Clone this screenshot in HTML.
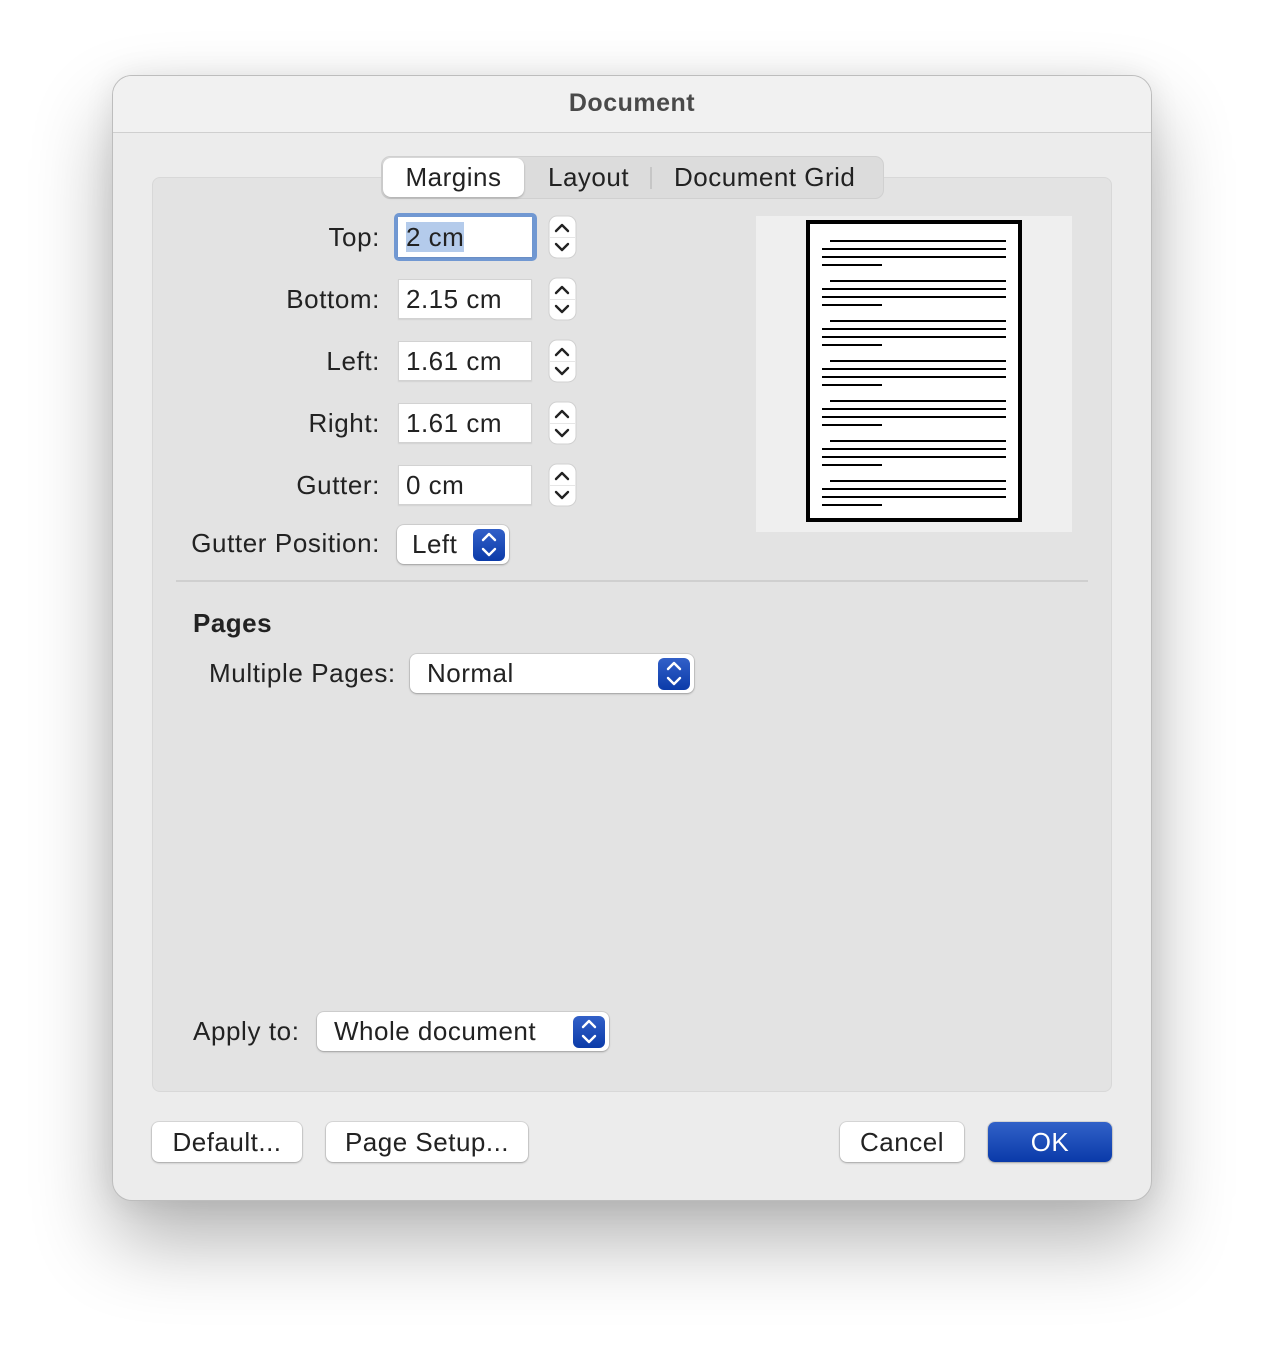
<!DOCTYPE html>
<html><head><meta charset="utf-8"><style>
*{margin:0;padding:0;box-sizing:border-box}
body{width:1264px;height:1350px;background:#fff;position:relative;overflow:hidden;font-family:"Liberation Sans",sans-serif;color:#222;font-size:26px;letter-spacing:0.5px}
.a{position:absolute;white-space:nowrap}
.win{left:112px;top:75px;width:1040px;height:1126px;border-radius:20px;background:#ececec;border:1px solid #bdbdbd;box-shadow:0 40px 80px rgba(0,0,0,0.30),0 0 30px rgba(0,0,0,0.08);overflow:hidden}
.title{left:0;top:0;width:100%;height:57px;background:#f1f1f1;border-bottom:1px solid #cfcfcf;text-align:center;line-height:55px;font-weight:bold;color:#4a4a4a;font-size:25px}
.box{left:152px;top:177px;width:960px;height:915px;background:#e3e3e3;border:1px solid #d8d8d8;border-radius:8px}
.lbl{text-align:right;width:262px;left:118px;line-height:40px;letter-spacing:0.6px}
.fld{background:#fff;border:1px solid #d2d2d2;height:40px;width:134px;left:398px;line-height:38px;padding-left:7px;box-shadow:0 1px 1px rgba(0,0,0,0.08)}
.pop{background:#fff;border-radius:7px;box-shadow:0 0 0 1px rgba(0,0,0,0.08),0 1px 2px rgba(0,0,0,0.25);line-height:39px;height:39px}
.blu{width:32px;height:32px;border-radius:6px;background:linear-gradient(#3260c8,#0b3ba9);top:4px}
.btn{background:#fff;border-radius:7px;box-shadow:0 0 0 1px rgba(0,0,0,0.08),0 1px 2px rgba(0,0,0,0.25);text-align:center;height:40px;line-height:40px}
</style></head><body>
<div class="a win">
 <div class="a title">Document</div>
</div>
<div class="a box"></div>
<!-- tabs -->
<div class="a" style="left:381px;top:156px;width:503px;height:43px;background:#dcdcdc;border:1px solid #d0d0d0;border-radius:9px"></div>
<div class="a" style="left:383px;top:158px;width:141px;height:39px;background:#fff;border-radius:8px;box-shadow:0 1px 2px rgba(0,0,0,0.25);text-align:center;line-height:38px">Margins</div>
<div class="a" style="left:548px;top:158px;line-height:38px">Layout</div>
<div class="a" style="left:650px;top:167px;width:2px;height:22px;background:#c6c6c6"></div>
<div class="a" style="left:674px;top:158px;line-height:38px">Document Grid</div>
<!-- fields -->
<div class="a lbl" style="top:217px">Top:</div>
<div class="a" style="left:394px;top:213px;width:143px;height:48px;border-radius:5px;background:#7198d2"></div>
<div class="a fld" style="top:217px;border-color:#fff"><span style="background:#b4cbeb">2 cm</span></div>
<div class="a lbl" style="top:279px">Bottom:</div><div class="a fld" style="top:279px">2.15 cm</div>
<div class="a lbl" style="top:341px">Left:</div><div class="a fld" style="top:341px">1.61 cm</div>
<div class="a lbl" style="top:403px">Right:</div><div class="a fld" style="top:403px">1.61 cm</div>
<div class="a lbl" style="top:465px">Gutter:</div><div class="a fld" style="top:465px">0 cm</div>
<svg class="a" style="left:0;top:0" width="1264" height="1350">
 <g>
 <rect x="549" y="216" width="27" height="42" rx="8" fill="#fff" stroke="#d0d0d0"/>
 <rect x="549" y="278" width="27" height="42" rx="8" fill="#fff" stroke="#d0d0d0"/>
 <rect x="549" y="340" width="27" height="42" rx="8" fill="#fff" stroke="#d0d0d0"/>
 <rect x="549" y="402" width="27" height="42" rx="8" fill="#fff" stroke="#d0d0d0"/>
 <rect x="549" y="464" width="27" height="42" rx="8" fill="#fff" stroke="#d0d0d0"/>
 </g>
 <g stroke="#e6e6e6" stroke-width="1"><path d="M550 237.5h25M550 299.5h25M550 361.5h25M550 423.5h25M550 485.5h25"/></g>
 <g fill="none" stroke="#222" stroke-width="2.4" stroke-linecap="round" stroke-linejoin="round">
 <path d="M556 231l6-6 6 6M556 244l6 6 6-6"/>
 <path d="M556 293l6-6 6 6M556 306l6 6 6-6"/>
 <path d="M556 355l6-6 6 6M556 368l6 6 6-6"/>
 <path d="M556 417l6-6 6 6M556 430l6 6 6-6"/>
 <path d="M556 479l6-6 6 6M556 492l6 6 6-6"/>
 </g>
 <!-- preview -->
 <rect x="756" y="216" width="316" height="316" fill="#efefef"/>
 <rect x="808" y="222" width="212" height="298" fill="#fff" stroke="#000" stroke-width="4"/>
 <g fill="#000">
 <rect x="830" y="240" width="176" height="2"/><rect x="822" y="248" width="184" height="2"/><rect x="822" y="256" width="184" height="2"/><rect x="822" y="264" width="60" height="2"/>
 <rect x="830" y="280" width="176" height="2"/><rect x="822" y="288" width="184" height="2"/><rect x="822" y="296" width="184" height="2"/><rect x="822" y="304" width="60" height="2"/>
 <rect x="830" y="320" width="176" height="2"/><rect x="822" y="328" width="184" height="2"/><rect x="822" y="336" width="184" height="2"/><rect x="822" y="344" width="60" height="2"/>
 <rect x="830" y="360" width="176" height="2"/><rect x="822" y="368" width="184" height="2"/><rect x="822" y="376" width="184" height="2"/><rect x="822" y="384" width="60" height="2"/>
 <rect x="830" y="400" width="176" height="2"/><rect x="822" y="408" width="184" height="2"/><rect x="822" y="416" width="184" height="2"/><rect x="822" y="424" width="60" height="2"/>
 <rect x="830" y="440" width="176" height="2"/><rect x="822" y="448" width="184" height="2"/><rect x="822" y="456" width="184" height="2"/><rect x="822" y="464" width="60" height="2"/>
 <rect x="830" y="480" width="176" height="2"/><rect x="822" y="488" width="184" height="2"/><rect x="822" y="496" width="184" height="2"/><rect x="822" y="504" width="60" height="2"/>
 </g>
 <rect x="176" y="580" width="912" height="2" fill="#cfcfcf"/>
</svg>
<!-- gutter position -->
<div class="a lbl" style="top:523px">Gutter Position:</div>
<div class="a pop" style="left:397px;top:525px;width:112px;padding-left:15px">Left<div class="a blu" style="left:76px"></div></div>
<!-- pages -->
<div class="a" style="left:193px;top:603px;font-weight:bold;line-height:40px">Pages</div>
<div class="a" style="left:209px;top:653px;line-height:40px;letter-spacing:0.6px">Multiple Pages:</div>
<div class="a pop" style="left:410px;top:654px;width:284px;padding-left:17px">Normal<div class="a blu" style="left:248px"></div></div>
<div class="a" style="left:193px;top:1011px;line-height:40px;letter-spacing:0.6px">Apply to:</div>
<div class="a pop" style="left:317px;top:1012px;width:292px;padding-left:17px">Whole document<div class="a blu" style="left:256px"></div></div>
<!-- chevrons in blue buttons -->
<svg class="a" style="left:0;top:0" width="1264" height="1350" fill="none" stroke="#fff" stroke-width="2.4" stroke-linecap="round" stroke-linejoin="round">
 <path d="M483 540l6-6 6 6M483 549l6 6 6-6"/>
 <path d="M668 669l6-6 6 6M668 678l6 6 6-6"/>
 <path d="M583 1027l6-6 6 6M583 1036l6 6 6-6"/>
</svg>
<!-- buttons -->
<div class="a btn" style="left:152px;top:1122px;width:150px">Default...</div>
<div class="a btn" style="left:326px;top:1122px;width:202px">Page Setup...</div>
<div class="a btn" style="left:840px;top:1122px;width:124px">Cancel</div>
<div class="a btn" style="left:988px;top:1122px;width:124px;background:linear-gradient(#3262c8,#0a3aa9);color:#fff">OK</div>
</body></html>
